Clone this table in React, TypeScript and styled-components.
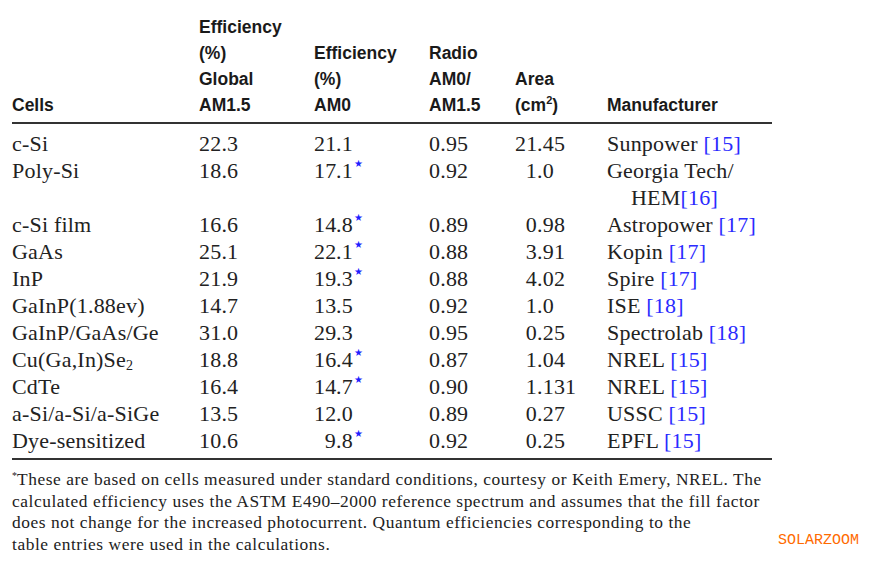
import React from "react";
import styled, { createGlobalStyle } from "styled-components";

const GlobalStyle = createGlobalStyle`
  html, body { margin: 0; padding: 0; background: #ffffff; }
  body { width: 879px; height: 573px; overflow: hidden; }
`;

const Page = styled.div`
  padding: 14px 0 0 12px;
  width: 867px;
  box-sizing: border-box;
`;

const Table = styled.div`
  width: 760px;
  display: grid;
  grid-template-columns: 187px 115px 115px 86px 92px 1fr;
`;

const HeadCell = styled.div`
  align-self: end;
  padding-bottom: 4px;
  font-family: "Liberation Sans", Arial, sans-serif;
  font-weight: 700;
  font-size: 17.5px;
  line-height: 26px;
  color: #1a1a1a;
`;

const HeadRule = styled.div`
  grid-column: 1 / -1;
  height: 2px;
  background: #333333;
`;

const Cell = styled.div<{ $first?: boolean; $last?: boolean }>`
  font-family: "Liberation Serif", "Times New Roman", serif;
  font-size: 22px;
  line-height: 27px;
  letter-spacing: 0.2px;
  color: #222222;
  white-space: nowrap;
  padding-top: ${(p) => (p.$first ? 6 : 0)}px;
  padding-bottom: ${(p) => (p.$last ? 4 : 0)}px;
`;

const IntPart = styled.span<{ $w: number }>`
  display: inline-block;
  width: ${(p) => p.$w}px;
  text-align: right;
`;

const Star = styled.sup`
  color: #1f1fff;
  font-size: 10px;
  line-height: 0;
  vertical-align: 0;
  position: relative;
  top: -11px;
  margin-left: 1px;
`;

const Ref = styled.span`
  color: #2b2bff;
`;

const Sub = styled.sub`
  font-size: 14px;
  line-height: 0;
  vertical-align: -3px;
`;

const Sup = styled.sup`
  font-size: 11px;
  line-height: 0;
  vertical-align: 7px;
`;

const Indented = styled.div`
  padding-left: 24px;
`;

const Footer = styled.div`
  display: flex;
  align-items: flex-end;
  gap: 10px;
  margin-top: 9px;
`;

const Footnote = styled.div`
  width: 756px;
  font-family: "Liberation Serif", "Times New Roman", serif;
  font-size: 17.4px;
  line-height: 21.7px;
  letter-spacing: 0.55px;
  color: #222222;
`;

const NoteLine = styled.div`
  white-space: nowrap;
`;

const NoteStar = styled.sup`
  font-size: 10px;
  line-height: 0;
  vertical-align: 6px;
  letter-spacing: 0;
`;

const Watermark = styled.div`
  font-family: "Liberation Mono", "DejaVu Sans Mono", monospace;
  font-size: 15px;
  line-height: 15px;
  color: #ff6a00;
  padding-bottom: 8px;
`;

type Row = {
  cell: React.ReactNode;
  g: string;
  a: string;
  star?: boolean;
  r: string;
  area: string;
  man: React.ReactNode;
};

const Num: React.FC<{ v: string; w: number }> = ({ v, w }) => {
  const i = v.indexOf(".");
  return (
    <>
      <IntPart $w={w}>{v.slice(0, i)}</IntPart>
      {v.slice(i)}
    </>
  );
};

const rows: Row[] = [
  { cell: "c-Si", g: "22.3", a: "21.1", r: "0.95", area: "21.45", man: <>Sunpower <Ref>[15]</Ref></> },
  {
    cell: "Poly-Si",
    g: "18.6",
    a: "17.1",
    star: true,
    r: "0.92",
    area: "1.0",
    man: (
      <>
        Georgia Tech/
        <Indented>
          HEM<Ref>[16]</Ref>
        </Indented>
      </>
    ),
  },
  { cell: "c-Si film", g: "16.6", a: "14.8", star: true, r: "0.89", area: "0.98", man: <>Astropower <Ref>[17]</Ref></> },
  { cell: "GaAs", g: "25.1", a: "22.1", star: true, r: "0.88", area: "3.91", man: <>Kopin <Ref>[17]</Ref></> },
  { cell: "InP", g: "21.9", a: "19.3", star: true, r: "0.88", area: "4.02", man: <>Spire <Ref>[17]</Ref></> },
  { cell: "GaInP(1.88ev)", g: "14.7", a: "13.5", r: "0.92", area: "1.0", man: <>ISE <Ref>[18]</Ref></> },
  { cell: "GaInP/GaAs/Ge", g: "31.0", a: "29.3", r: "0.95", area: "0.25", man: <>Spectrolab <Ref>[18]</Ref></> },
  {
    cell: (
      <>
        Cu(Ga,In)Se<Sub>2</Sub>
      </>
    ),
    g: "18.8",
    a: "16.4",
    star: true,
    r: "0.87",
    area: "1.04",
    man: <>NREL <Ref>[15]</Ref></>,
  },
  { cell: "CdTe", g: "16.4", a: "14.7", star: true, r: "0.90", area: "1.131", man: <>NREL <Ref>[15]</Ref></> },
  { cell: "a-Si/a-Si/a-SiGe", g: "13.5", a: "12.0", r: "0.89", area: "0.27", man: <>USSC <Ref>[15]</Ref></> },
  { cell: "Dye-sensitized", g: "10.6", a: "9.8", star: true, r: "0.92", area: "0.25", man: <>EPFL <Ref>[15]</Ref></> },
];

export default function App() {
  return (
    <>
      <GlobalStyle />
      <Page>
        <Table>
          <HeadCell>Cells</HeadCell>
          <HeadCell>
            Efficiency
            <br />
            (%)
            <br />
            Global
            <br />
            AM1.5
          </HeadCell>
          <HeadCell>
            Efficiency
            <br />
            (%)
            <br />
            AM0
          </HeadCell>
          <HeadCell>
            Radio
            <br />
            AM0/
            <br />
            AM1.5
          </HeadCell>
          <HeadCell>
            Area
            <br />
            (cm<Sup>2</Sup>)
          </HeadCell>
          <HeadCell>Manufacturer</HeadCell>
          <HeadRule />
          {rows.map((row, idx) => {
            const first = idx === 0;
            const last = idx === rows.length - 1;
            return (
              <React.Fragment key={idx}>
                <Cell $first={first} $last={last}>{row.cell}</Cell>
                <Cell $first={first} $last={last}>{row.g}</Cell>
                <Cell $first={first} $last={last}>
                  <Num v={row.a} w={22} />
                  {row.star && <Star>★</Star>}
                </Cell>
                <Cell $first={first} $last={last}>{row.r}</Cell>
                <Cell $first={first} $last={last}>
                  <Num v={row.area} w={22} />
                </Cell>
                <Cell $first={first} $last={last}>{row.man}</Cell>
              </React.Fragment>
            );
          })}
          <HeadRule />
        </Table>
        <Footer>
          <Footnote>
            <NoteLine>
              <NoteStar>*</NoteStar>These are based on cells measured under standard conditions, courtesy or Keith Emery, NREL. The
            </NoteLine>
            <NoteLine>
              calculated efficiency uses the ASTM E490–2000 reference spectrum and assumes that the fill factor
            </NoteLine>
            <NoteLine>
              does not change for the increased photocurrent. Quantum efficiencies corresponding to the
            </NoteLine>
            <NoteLine>table entries were used in the calculations.</NoteLine>
          </Footnote>
          <Watermark>SOLARZOOM</Watermark>
        </Footer>
      </Page>
    </>
  );
}
